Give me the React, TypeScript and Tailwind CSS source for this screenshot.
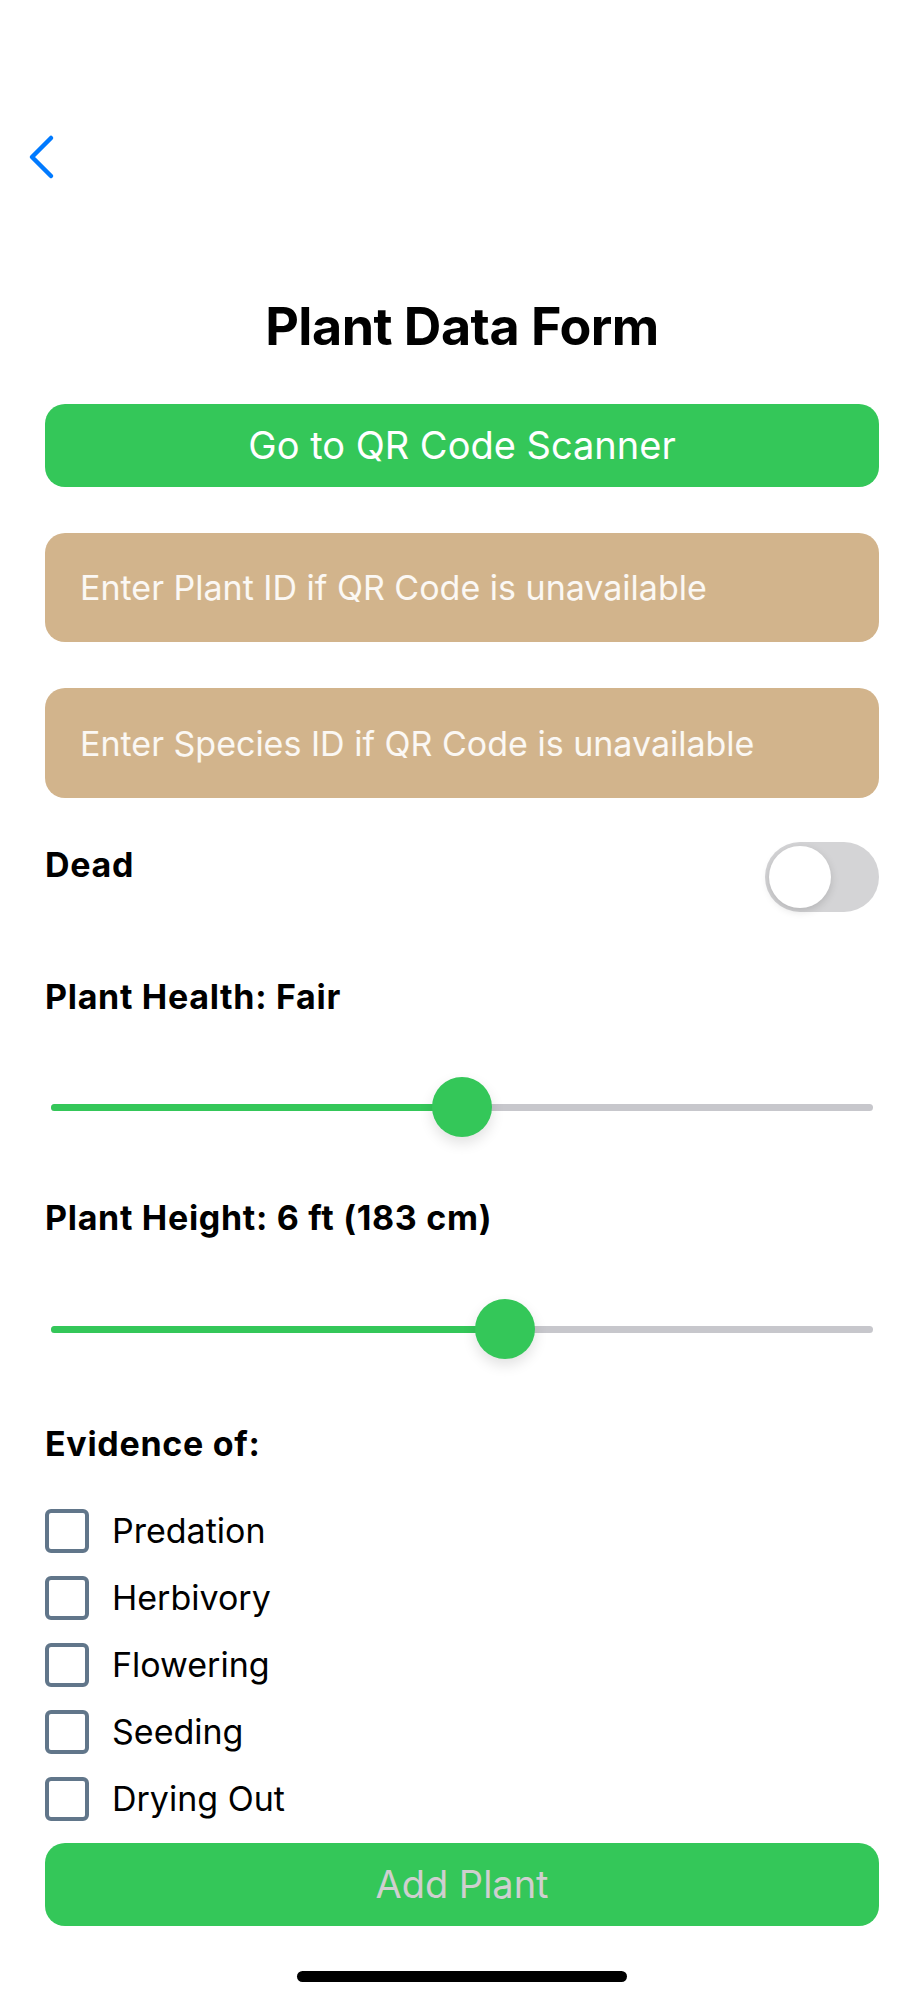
import { useState } from 'react'

const evidence = ['Predation', 'Herbivory', 'Flowering', 'Seeding', 'Drying Out']

function Slider({ value }: { value: number }) {
  // thumb travels between track ends, inset by its radius
  return (
    <div className="relative h-[60px] mx-[6px]">
      <div className="absolute left-0 right-0 top-[27px] h-[7px] rounded-full bg-[#c7c7cc]" />
      <div
        className="absolute left-0 top-[27px] h-[7px] rounded-full bg-[#34c759]"
        style={{ width: `calc(30px + (100% - 60px) * ${value})` }}
      />
      <div
        className="absolute top-0 w-[60px] h-[60px] rounded-full bg-[#34c759] shadow-[0_6px_14px_rgba(0,0,0,0.12)]"
        style={{ left: `calc((100% - 60px) * ${value})` }}
      />
    </div>
  )
}

export default function App() {
  const [dead, setDead] = useState(false)
  const [checked, setChecked] = useState<Record<string, boolean>>({})

  return (
    <div className="w-[924px] h-[2000px] bg-white font-['Inter',sans-serif] text-black">
      {/* Nav */}
      <div className="h-[180px] pl-[27px] pt-[134px]">
        <svg width="30" height="46" viewBox="0 0 30 46" fill="none">
          <polyline points="24,4 5,23 24,42" stroke="#007aff" strokeWidth="4.5" strokeLinecap="round" strokeLinejoin="round" />
        </svg>
      </div>

      <div className="px-[45px] flex flex-col">
        <h1 className="mt-[117px] text-[52px] leading-[60px] font-bold text-center tracking-[-0.5px]">Plant Data Form</h1>

        <button className="mt-[47px] h-[83px] rounded-[20px] bg-[#34c759] text-white text-[38px]">
          Go to QR Code Scanner
        </button>

        <div className="mt-[46px] h-[109px] rounded-[20px] bg-[#d2b48c] flex items-center pl-[35px] text-[34px] text-white/90">
          Enter Plant ID if QR Code is unavailable
        </div>
        <div className="mt-[46px] h-[110px] rounded-[20px] bg-[#d2b48c] flex items-center pl-[35px] text-[34px] text-white/90">
          Enter Species ID if QR Code is unavailable
        </div>

        {/* Dead toggle */}
        <div className="mt-[44px] flex justify-between items-start">
          <span className="text-[34px] leading-[40px] font-bold tracking-[0.7px] mt-[3px]">Dead</span>
          <button
            onClick={() => setDead(!dead)}
            className={`w-[114px] h-[70px] rounded-full p-[4px] flex ${dead ? 'bg-[#34c759] justify-end' : 'bg-[#d4d4d6] justify-start'}`}
          >
            <span className="w-[62px] h-[62px] rounded-full bg-white shadow-[0_3px_8px_rgba(0,0,0,0.15)]" />
          </button>
        </div>

        <div className="mt-[65px] text-[34px] leading-[40px] font-bold tracking-[0.7px]">Plant Health: Fair</div>
        <div className="mt-[60px]">
          <Slider value={0.5} />
        </div>

        <div className="mt-[61px] text-[34px] leading-[40px] font-bold tracking-[0.7px]">Plant Height: 6 ft (183 cm)</div>
        <div className="mt-[61px]">
          <Slider value={0.557} />
        </div>

        <div className="mt-[65px] text-[34px] leading-[40px] font-bold tracking-[0.7px]">Evidence of:</div>

        <div className="mt-[45px] flex flex-col gap-[23px]">
          {evidence.map(item => (
            <label key={item} className="flex items-center gap-[23px] cursor-pointer">
              <span
                onClick={() => setChecked({ ...checked, [item]: !checked[item] })}
                className="w-[44px] h-[44px] rounded-[6px] border-[4px] border-[#61768a] flex-shrink-0"
              />
              <span className="text-[34px] leading-[44px]">{item}</span>
            </label>
          ))}
        </div>

        <button className="mt-[22px] h-[83px] rounded-[20px] bg-[#34c759] text-[#cfcfcf] text-[38px]">
          Add Plant
        </button>

        <div className="mt-[45px] mx-auto w-[330px] h-[11px] rounded-full bg-black" />
      </div>
    </div>
  )
}
